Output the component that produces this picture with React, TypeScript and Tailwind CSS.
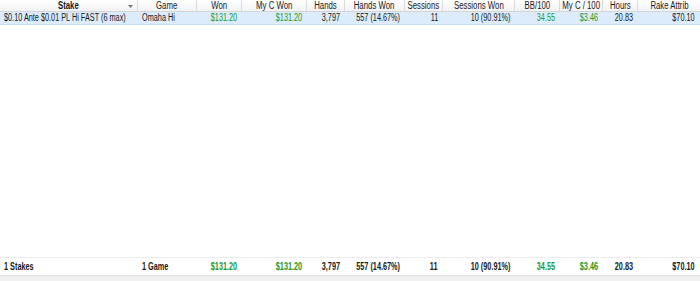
import React from "react";

const cols = [
  { h: "Stake", w: 138 },
  { h: "Game", w: 59 },
  { h: "Won", w: 45 },
  { h: "My C Won", w: 65 },
  { h: "Hands", w: 38 },
  { h: "Hands Won", w: 60 },
  { h: "Sessions", w: 38 },
  { h: "Sessions Won", w: 72 },
  { h: "BB/100", w: 45 },
  { h: "My C / 100", w: 43 },
  { h: "Hours", w: 35 },
  { h: "Rake Attrib", w: 62 },
];

type Cell = { t: string; g?: boolean; left?: boolean };

const row: Cell[] = [
  { t: "$0.10 Ante $0.01 PL Hi FAST (6 max)", left: true },
  { t: "Omaha Hi", left: true },
  { t: "$131.20", g: true },
  { t: "$131.20", g: true },
  { t: "3,797" },
  { t: "557 (14.67%)" },
  { t: "11" },
  { t: "10 (90.91%)" },
  { t: "34.55", g: true },
  { t: "$3.46", g: true },
  { t: "20.83" },
  { t: "$70.10" },
];

const foot: Cell[] = [
  { t: "1 Stakes", left: true },
  { t: "1 Game", left: true },
  { t: "$131.20", g: true },
  { t: "$131.20", g: true },
  { t: "3,797" },
  { t: "557 (14.67%)" },
  { t: "11" },
  { t: "10 (90.91%)" },
  { t: "34.55", g: true },
  { t: "$3.46", g: true },
  { t: "20.83" },
  { t: "$70.10" },
];

function Cells({ cells }: { cells: Cell[] }) {
  return (
    <>
      {cells.map((c, i) => (
        <div
          key={i}
          style={{ width: cols[i].w }}
          className={`shrink-0 flex items-center leading-none whitespace-nowrap ${c.left ? "justify-start pl-[4px]" : "justify-end pr-[5px]"} ${c.g ? "text-[#23992a]" : ""}`}
        >
          <span className={`inline-block scale-x-[0.73] ${c.left ? "origin-left" : "origin-right"}`}>{c.t}</span>
        </div>
      ))}
    </>
  );
}

export default function App() {
  return (
    <div
      className="w-[700px] h-[281px] bg-white flex flex-col text-[10px] text-[#1a1a1a] overflow-hidden"
      style={{ fontFamily: '"Liberation Sans", Arial, sans-serif' }}
    >
      <div className="flex h-[12px] bg-gradient-to-b from-white to-[#f1f2f4] border-b border-[#d5d5d5]">
        {cols.map((c, i) => (
          <div
            key={c.h}
            style={{ width: c.w }}
            className={`relative shrink-0 flex items-center justify-center leading-none whitespace-nowrap ${i < cols.length - 1 ? "border-r border-[#dadada]" : ""} ${i === 0 ? "font-bold" : ""}`}
          >
            <span className="inline-block scale-x-[0.78] origin-center">{c.h}</span>
            {i === 0 && (
              <svg className="absolute right-[4px] top-[5px]" width="5" height="3" viewBox="0 0 5 3">
                <path d="M0 0H5L2.5 3Z" fill="#777" />
              </svg>
            )}
          </div>
        ))}
      </div>
      <div className="flex h-[13px] bg-[#dcecfc] border-b border-[#c5dcf6]">
        <Cells cells={row} />
      </div>
      <div className="flex-1" />
      <div className="flex h-[18px] items-center border-t border-[#ececec] font-bold">
        <Cells cells={foot} />
      </div>
      <div className="h-[6px] bg-[#f0f0f0] border-t border-[#e3e3e3]" />
    </div>
  );
}
